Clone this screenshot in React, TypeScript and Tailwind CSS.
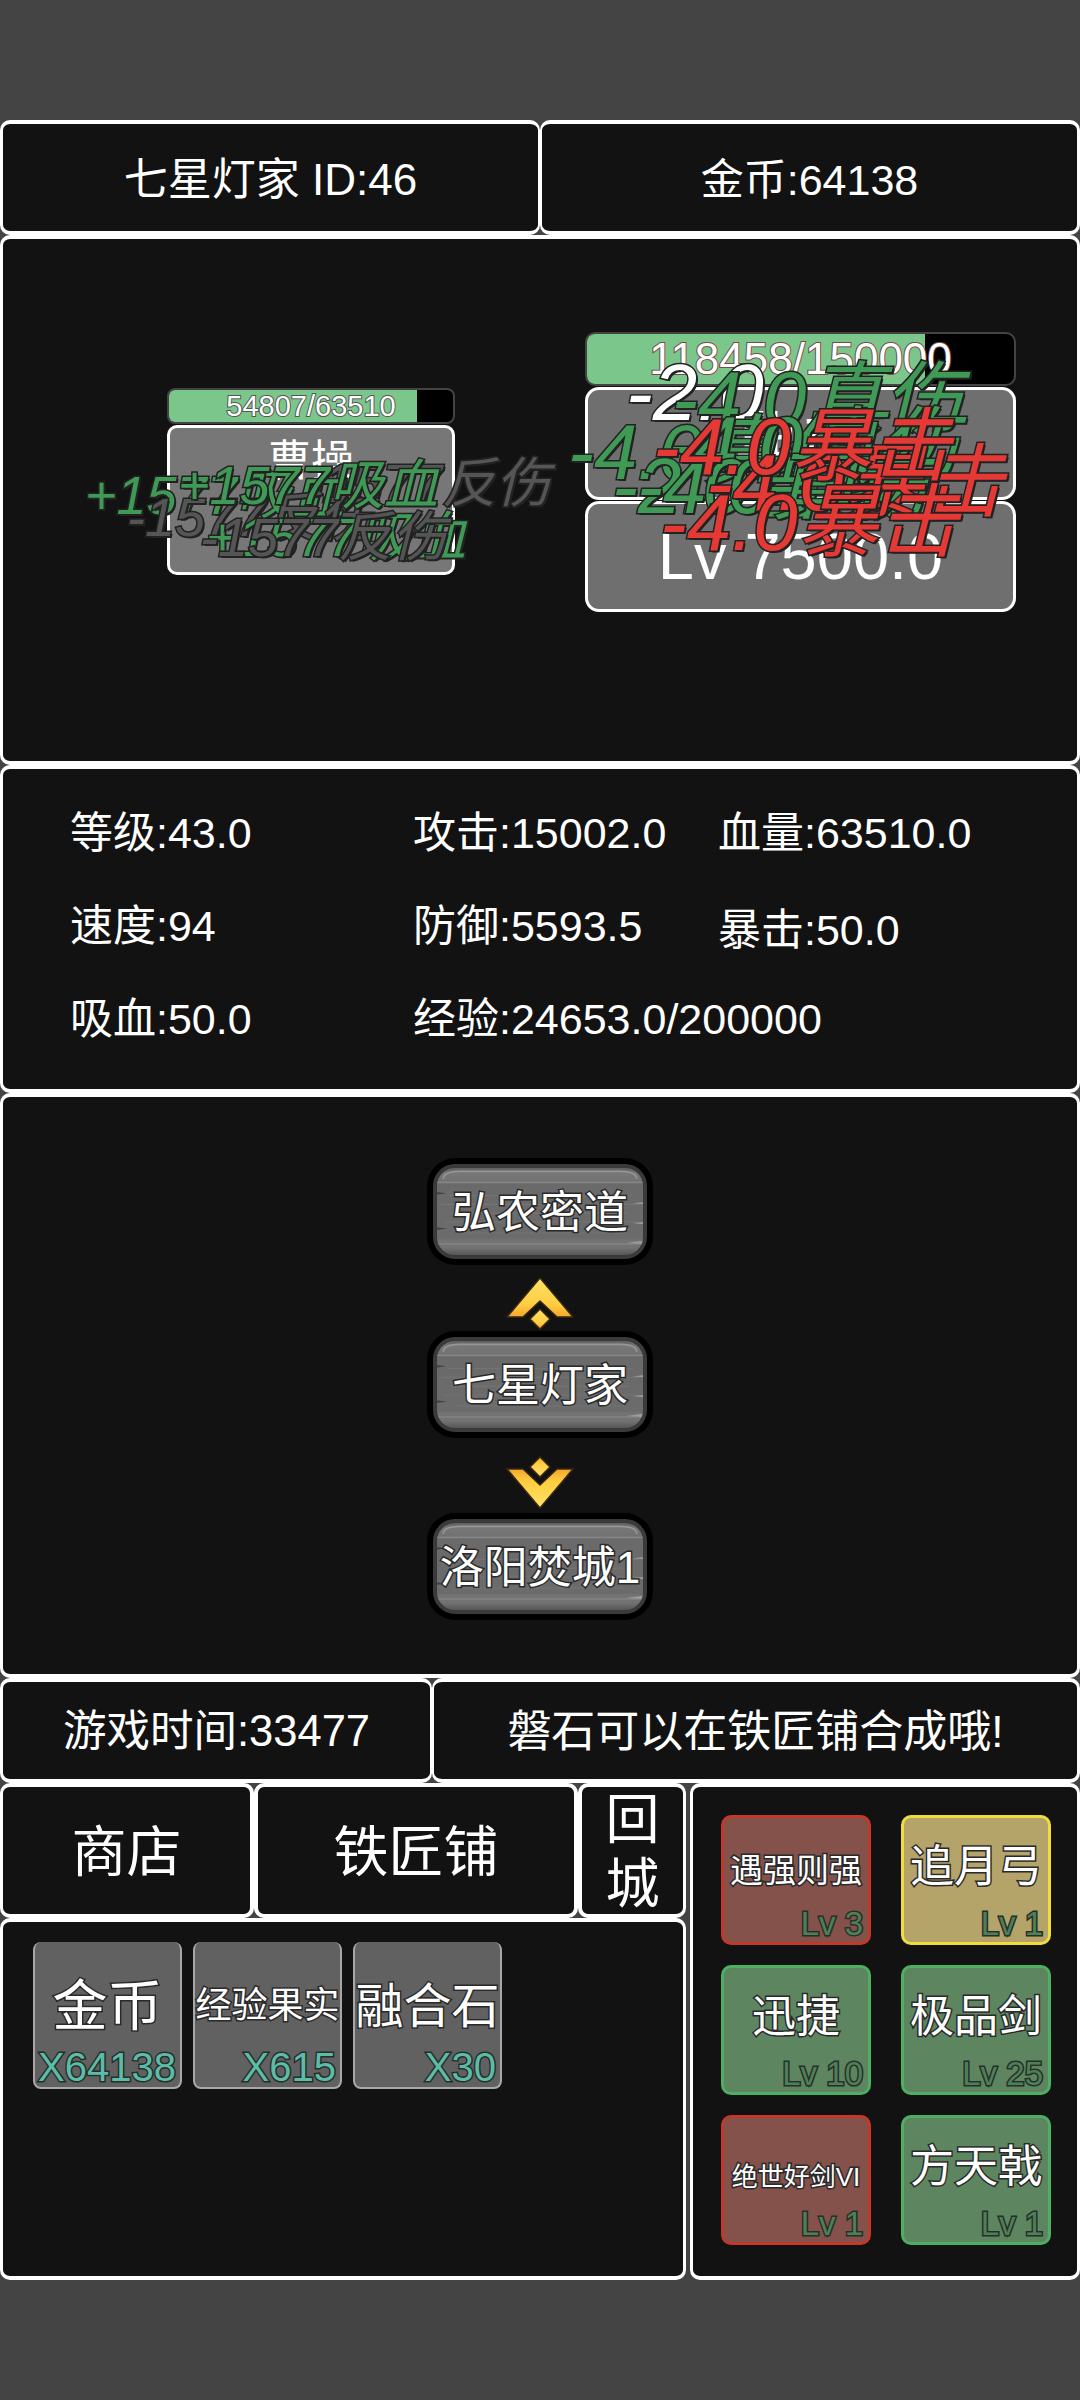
const panel = "rounded-[10px] border-x-[3px] border-y-[4px] border-white bg-[#121212]";
const outline = "[paint-order:stroke_fill] [-webkit-text-stroke:3px_#2a2a2a]";
const thin = "[paint-order:stroke_fill] [-webkit-text-stroke:3px_#263028]";
const floatBase = "absolute italic whitespace-nowrap leading-none [paint-order:stroke_fill] [-webkit-text-stroke:3px_#222] [text-shadow:2px_2px_0_#222]";
const floats = [
  { t: "-2.0", c: "left-[626px] top-[118px] text-[80px] text-white" },
  { t: "-1577反伤", c: "left-[304px] top-[221px] text-[54px] text-[#555555]" },
  { t: "+1577吸血", c: "left-[85px] top-[233px] text-[54px] text-[#3f9a55]" },
  { t: "-1577反伤", c: "left-[127px] top-[255px] text-[54px] text-[#555555]" },
  { t: "+1577吸血", c: "left-[178px] top-[223px] text-[54px] text-[#3f9a55]" },
  { t: "+1577吸血", c: "left-[206px] top-[275px] text-[54px] text-[#3f9a55]" },
  { t: "-1577反伤", c: "left-[200px] top-[275px] text-[54px] text-[#555555]" },
  { t: "-4.0真伤", c: "left-[672px] top-[125px] text-[78px] text-[#3f9a55]" },
  { t: "-4.0真伤", c: "left-[568px] top-[178px] text-[78px] text-[#3f9a55]" },
  { t: "-4.0真伤", c: "left-[668px] top-[170px] text-[78px] text-[#3f9a55]" },
  { t: "-2.0普攻", c: "left-[612px] top-[212px] text-[78px] text-[#3f9a55]" },
  { t: "-4.0真伤", c: "left-[637px] top-[212px] text-[78px] text-[#3f9a55]" },
  { t: "-4.0暴击", c: "left-[706px] top-[208px] text-[80px] text-[#e53935]" },
  { t: "-4.0暴击", c: "left-[653px] top-[172px] text-[80px] text-[#e53935]" },
  { t: "-4.0暴击", c: "left-[660px] top-[248px] text-[80px] text-[#e53935]" },
];

function Plank({ label }: { label: string }) {
  return (
    <div className="relative h-[107px] w-[226px] rounded-[28px] bg-black p-[6px]">
      <div className="relative h-full w-full overflow-hidden rounded-[22px] border-[4px] border-[#3a3a3a] bg-[linear-gradient(#5f5f5f_0%,#777777_6%,#737373_14%,#6a6a6a_18%,#6b6b6b_80%,#747474_84%,#727272_92%,#565656_100%)]">
        <svg className="absolute inset-0 h-full w-full" viewBox="0 0 198 79" preserveAspectRatio="none">
          <path d="M6 10 Q6 3 22 3 H176 Q192 3 192 10" fill="none" stroke="#969696" strokeWidth="1.5" />
          <path d="M0 13 H198 M0 69 H198" stroke="#848484" strokeWidth="1.5" />
          <path d="M10 25 H188 M4 33 H194 M14 41 H184 M6 49 H192 M18 59 H180" stroke="#868686" strokeWidth="1" opacity="0.35" />
          <path d="M0 22 L9 23 L0 24Z M0 54 L10 55 L0 56Z" fill="#3e3e3e" />
          <path d="M198 31 L188 32 L198 33Z M198 49 L188 50 L198 51Z M198 66 L182 68 L198 69Z" fill="#9c9c9c" />
        </svg>
        <div className={`absolute inset-0 flex items-center justify-center whitespace-nowrap pt-[2px] text-[44px] leading-none text-white ${outline}`}>{label}</div>
      </div>
    </div>
  );
}

function Chevron({ down }: { down?: boolean }) {
  return (
    <svg width="70" height="54" viewBox="0 0 70 54" className={down ? "rotate-180" : ""}>
      <defs>
        <linearGradient id="gold" x1="0" y1="0" x2="0" y2="1">
          <stop offset="0" stopColor="#ffe36a" />
          <stop offset="0.7" stopColor="#ffcc3f" />
          <stop offset="1" stopColor="#f3a62c" />
        </linearGradient>
      </defs>
      <path d="M35 2 L68 41 L52 41 L35 25 L18 41 L2 41Z" fill="url(#gold)" stroke="#3a2a10" strokeWidth="1.5" strokeLinejoin="round" />
      <path d="M35 33 L45 43 L35 53 L25 43Z" fill="url(#gold)" stroke="#3a2a10" strokeWidth="1.5" strokeLinejoin="round" />
    </svg>
  );
}

function Item({ name, count, nameClass }: { name: string; count: string; nameClass: string }) {
  return (
    <div className="flex h-[147px] w-[149px] flex-col rounded-[8px] border-x-2 border-b-2 border-[#a8a8a8] bg-[#616161]">
      <div className={`flex h-[105px] items-center justify-center whitespace-nowrap leading-none text-white ${nameClass} ${outline}`}>{name}</div>
      <div className={`pr-[4px] text-right text-[40px] leading-none text-[#5cbcaa] ${thin}`}>{count}</div>
    </div>
  );
}

function Skill({ name, lv, tone, nameClass }: { name: string; lv: string; tone: string; nameClass: string }) {
  return (
    <div className={`flex h-[130px] w-[150px] flex-col rounded-[10px] border-[3px] ${tone}`}>
      <div className={`flex h-[89px] items-center justify-center whitespace-nowrap leading-none text-white ${nameClass} ${outline}`}>{name}</div>
      <div className={`pr-[5px] text-right text-[33px] leading-none text-[#4f7f58] ${thin}`}>{lv}</div>
    </div>
  );
}

const red = "border-[#c0392b] bg-[#84524a]";
const green = "border-[#4caf64] bg-[#5d8560]";
const yellow = "border-[#f0dc3c] bg-[#b5a46a]";

export default function App() {
  return (
    <div className="flex h-[2400px] w-[1080px] flex-col bg-[#444444] pt-[120px] font-['Liberation_Sans','Noto_Sans_CJK_SC',sans-serif] text-[43px] text-white">
      <div className="flex h-[115px]">
        <div className={`${panel} flex w-[540px] items-center justify-center border-r-2 pt-[5px] text-[44px]`}>七星灯家 ID:46</div>
        <div className={`${panel} flex flex-1 items-center justify-center border-l-2 pt-[5px]`}>金币:64138</div>
      </div>

      <div className={`${panel} relative flex h-[530px]`}>
        <div className="ml-[164px] mt-[149px] flex w-[288px] flex-col gap-[1px]">
          <div className="relative h-[36px] overflow-hidden rounded-[8px] border-2 border-[#444] bg-black">
            <div className="h-full w-[248px] bg-[#7bc68a]" />
            <div className="absolute inset-0 flex items-center justify-center text-[29px] leading-none text-white [paint-order:stroke_fill] [-webkit-text-stroke:2px_#555]">54807/63510</div>
          </div>
          <div className="flex h-[150px] flex-col items-center rounded-[10px] border-[3px] border-white bg-[#777777] pt-[12px] leading-none">
            曹操
          </div>
        </div>
        <div className="ml-[130px] mt-[93px] flex w-[431px] flex-col gap-[1px]">
          <div className="relative h-[54px] overflow-hidden rounded-[10px] border-2 border-[#444] bg-black">
            <div className="h-full w-[338px] bg-[#7bc68a]" />
            <div className="absolute inset-0 flex items-center justify-center text-[44px] leading-none text-white [paint-order:stroke_fill] [-webkit-text-stroke:2px_#7a4a4a]">118458/150000</div>
          </div>
          <div className="flex h-[113px] items-center justify-center rounded-[14px] border-[3px] border-white bg-[#6f6f6f] text-[65px] leading-none">典韦</div>
          <div className="flex h-[111px] items-center justify-center rounded-[14px] border-[3px] border-white bg-[#6f6f6f] text-[65px] leading-none">Lv 7500.0</div>
        </div>
        <div className="absolute -left-[3px] -top-[4px]">
          {floats.map((f, i) => (
            <div key={i} className={`${floatBase} ${f.c}`}>{f.t}</div>
          ))}
        </div>
      </div>

      <div className={`${panel} flex h-[328px] pl-[67px] pt-[37px]`}>
        <div className="flex w-[343px] flex-col gap-[39px] leading-[54px]">
          <div>等级:43.0</div>
          <div>速度:94</div>
          <div>吸血:50.0</div>
        </div>
        <div className="flex w-[305px] flex-col gap-[39px] leading-[54px]">
          <div>攻击:15002.0</div>
          <div>防御:5593.5</div>
          <div className="whitespace-nowrap">经验:24653.0/200000</div>
        </div>
        <div className="flex flex-col gap-[43px] leading-[54px]">
          <div>血量:63510.0</div>
          <div>暴击:50.0</div>
        </div>
      </div>

      <div className={`${panel} flex h-[585px] flex-col items-center pt-[61px]`}>
        <Plank label="弘农密道" />
        <div className="mt-[11px] h-[54px]"><Chevron /></div>
        <div className="mt-[1px]"><Plank label="七星灯家" /></div>
        <div className="mt-[18px] h-[54px]"><Chevron down /></div>
        <div className="mt-[3px]"><Plank label="洛阳焚城1" /></div>
      </div>

      <div className="flex h-[105px] text-[43.5px]">
        <div className={`${panel} flex w-[432px] items-center justify-center border-r-2 pt-[3px]`}>游戏时间:33477</div>
        <div className={`${panel} flex flex-1 items-center justify-center border-l-2 pt-[3px] text-[44px]`}>磐石可以在铁匠铺合成哦!</div>
      </div>

      <div className="flex h-[497px] gap-[4px]">
        <div className="flex w-[686px] flex-col">
          <div className="flex h-[135px]">
            <div className={`${panel} flex w-[254px] items-center justify-center border-r-[4px] pt-[3px] text-[55px]`}>商店</div>
            <div className={`${panel} flex w-[324px] items-center justify-center border-x-[4px] pt-[3px] text-[55px]`}>铁匠铺</div>
            <div className={`${panel} flex flex-1 flex-col items-center justify-center border-l-[4px] pt-[2px] text-[54px] leading-[64px]`}>
              <span>回</span><span>城</span>
            </div>
          </div>
          <div className={`${panel} flex flex-1 gap-[11px] pl-[30px] pt-[20px]`}>
            <Item name="金币" count="X64138" nameClass="text-[55px] pt-[23px]" />
            <Item name="经验果实" count="X615" nameClass="text-[36px] pt-[22px]" />
            <Item name="融合石" count="X30" nameClass="text-[48px] pt-[24px]" />
          </div>
        </div>
        <div className={`${panel} flex-1 pl-[28px] pt-[28px]`}>
          <div className="grid grid-cols-[150px_150px] gap-x-[30px] gap-y-[20px]">
            <Skill name="遇强则强" lv="Lv 3" tone={red} nameClass="text-[33px] pt-[16px]" />
            <Skill name="追月弓" lv="Lv 1" tone={yellow} nameClass="text-[44px] pt-[9px]" />
            <Skill name="迅捷" lv="Lv 10" tone={green} nameClass="text-[44px] pt-[8px]" />
            <Skill name="极品剑" lv="Lv 25" tone={green} nameClass="text-[44px] pt-[8px]" />
            <Skill name="绝世好剑VI" lv="Lv 1" tone={red} nameClass="text-[26px] pt-[28px]" />
            <Skill name="方天戟" lv="Lv 1" tone={green} nameClass="text-[44px] pt-[9px]" />
          </div>
        </div>
      </div>
    </div>
  );
}
